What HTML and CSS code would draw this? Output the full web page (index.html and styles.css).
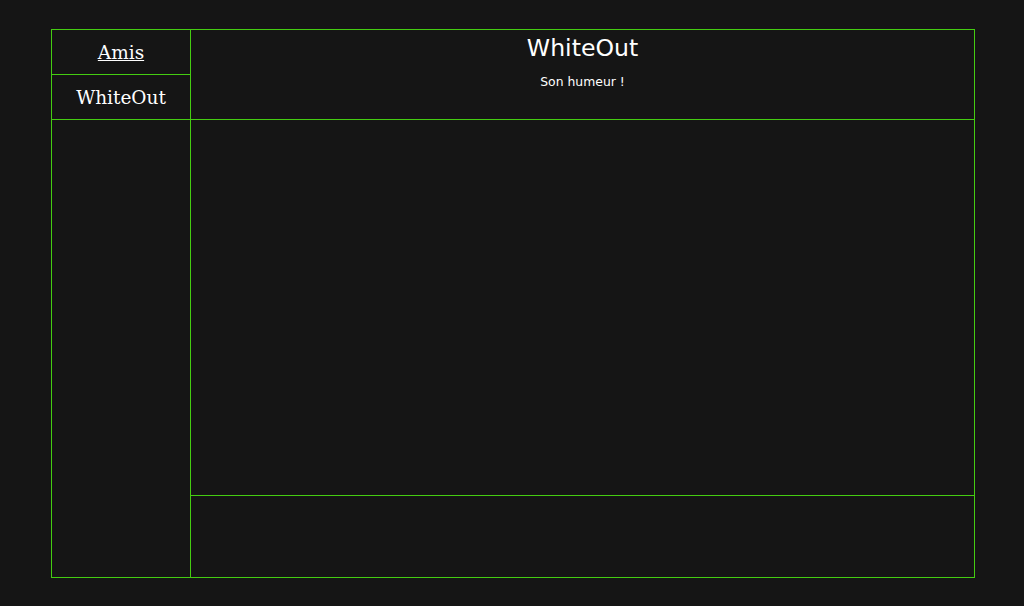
FILE: index.html
```html
<!DOCTYPE html>
<html lang="fr">
<head>
<meta charset="utf-8">
<title>WhiteOut</title>
<link rel="stylesheet" href="styles.css">
</head>
<body>
<div class="frame">
  <div class="side">
    <div class="nav-cell"><a href="#" class="nav-link">Amis</a></div>
    <div class="nav-cell">WhiteOut</div>
    <div class="side-fill"></div>
  </div>
  <div class="main">
    <div class="header">
      <h1 class="title">WhiteOut</h1>
      <p class="mood">Son humeur !</p>
    </div>
    <div class="content"></div>
    <div class="footer"></div>
  </div>
</div>
</body>
</html>
```

FILE: styles.css
```css
html, body {
  margin: 0;
  padding: 0;
  background: #151515;
  color: #ffffff;
  height: 100%;
}
body {
  padding: 29px 0 0 51px;
  box-sizing: border-box;
}
.frame {
  display: flex;
  width: 924px;
  height: 549px;
  box-sizing: border-box;
  border: 1px solid #44cc11;
}
.side {
  width: 138px;
  flex: none;
  display: flex;
  flex-direction: column;
  border-right: 1px solid #44cc11;
}
.nav-cell {
  height: 45px;
  box-sizing: border-box;
  border-bottom: 1px solid #44cc11;
  display: flex;
  align-items: center;
  justify-content: center;
  font-family: "DejaVu Serif", serif;
  font-size: 18.5px;
  color: #ffffff;
  padding-top: 1px;
}
.nav-link {
  color: #ffffff;
  text-decoration: underline;
}
.side-fill {
  flex: 1;
}
.main {
  flex: 1;
  display: flex;
  flex-direction: column;
}
.header {
  height: 90px;
  box-sizing: border-box;
  border-bottom: 1px solid #44cc11;
  text-align: center;
  font-family: "DejaVu Sans", sans-serif;
  padding-top: 2px;
}
.title {
  margin: 0;
  font-size: 23.6px;
  font-weight: normal;
  line-height: 32px;
}
.mood {
  margin: 10px 0 0;
  font-size: 12.4px;
  line-height: 16px;
}
.content {
  height: 376px;
  box-sizing: border-box;
  border-bottom: 1px solid #44cc11;
}
.footer {
  flex: 1;
}
```
